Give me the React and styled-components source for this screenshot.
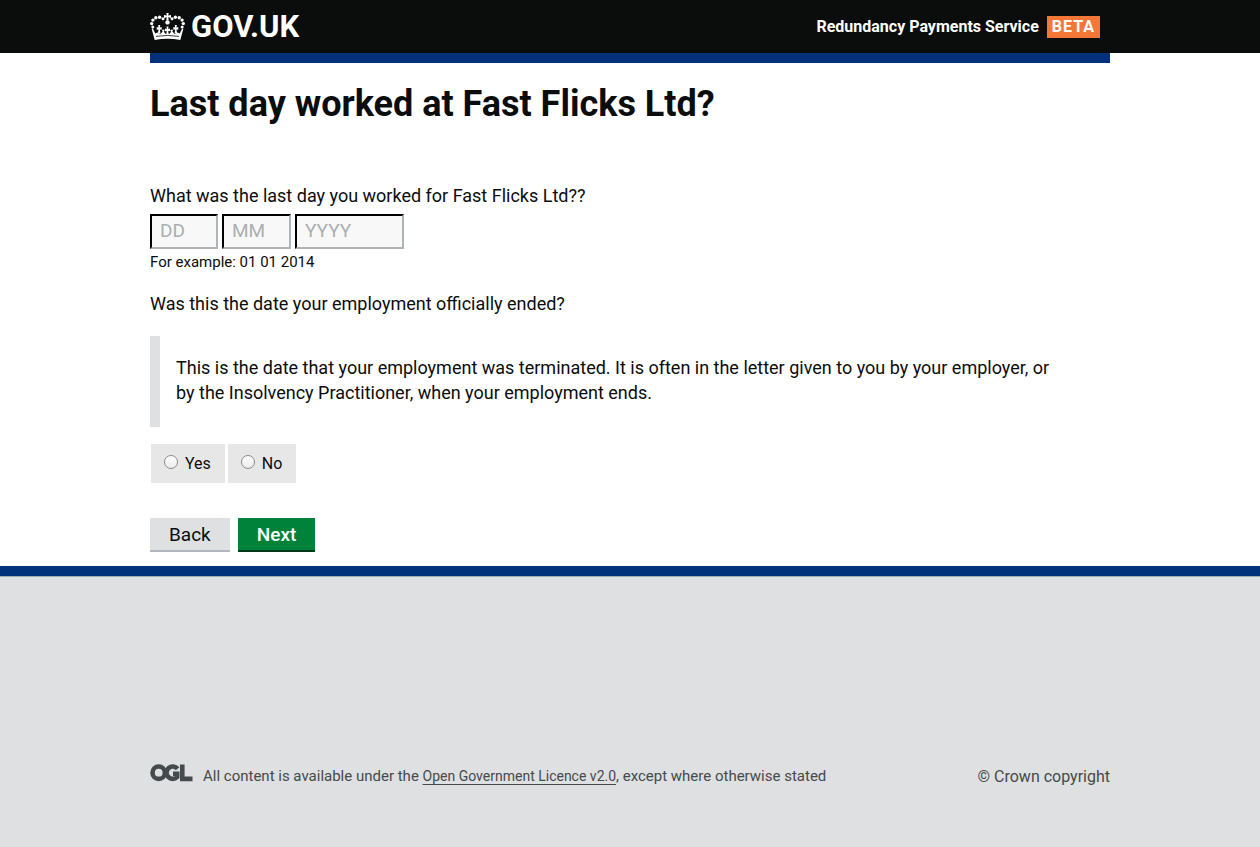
import React from "react";
import styled, { createGlobalStyle } from "styled-components";

const GlobalStyle = createGlobalStyle`
  *, *::before, *::after { box-sizing: border-box; }
  html { background: #dee0e2; }
  body {
    margin: 0;
    background: #fff;
    color: #0b0c0c;
    font-family: Roboto, "Liberation Sans", sans-serif;
    font-size: 18px;
    line-height: 25px;
  }
`;

const Container = styled.div`
  max-width: 960px;
  margin: 0 auto;
`;

const Header = styled.header`
  background: #0b0c0c;
`;

const HeaderInner = styled(Container)`
  display: flex;
  align-items: center;
  justify-content: space-between;
  height: 53px;
  padding-right: 10px;
`;

const Logo = styled.a`
  display: flex;
  align-items: center;
  gap: 6px;
  color: #fff;
  font-size: 31px;
  font-weight: 700;
  line-height: 32px;
  text-decoration: none;
`;

const Service = styled.div`
  display: flex;
  align-items: center;
  gap: 8px;
`;

const ServiceLink = styled.a`
  color: #fff;
  font-size: 16px;
  font-weight: 700;
  text-decoration: none;
`;

const Beta = styled.strong`
  padding: 0 5px;
  background: #f47738;
  color: #fff;
  font-size: 16px;
  font-weight: 700;
  line-height: 22px;
  letter-spacing: 1px;
`;

const BlueBar = styled(Container)`
  height: 10px;
  background: #00317a;
`;

const Main = styled(Container).attrs({ as: "main" })`
  padding: 21px 0 14px;
`;

const Title = styled.h1`
  margin: 0 0 59px;
  font-size: 36px;
  font-weight: 700;
  line-height: 40px;
`;

const Group = styled.fieldset`
  min-width: 0;
  margin: 0;
  padding: 0;
  border: 0;
`;

const Legend = styled.legend`
  padding: 0;
`;

const DateRow = styled.div`
  display: flex;
  gap: 4px;
  margin-top: 6px;
`;

const DateInput = styled.input`
  width: ${(p) => p.$width}px;
  height: 35px;
  padding: 0 8px 2px;
  border: 2px solid;
  border-color: #000 #b1b4b6 #b1b4b6 #000;
  border-radius: 0;
  background: #f8f8f8;
  color: #0b0c0c;
  font: inherit;
  font-size: 19px;
  &::placeholder { color: #a9afb2; opacity: 1; }
`;

const Hint = styled.p`
  margin: 1px 0 16px;
  font-size: 15px;
`;

const Panel = styled.div`
  margin: 20px 0 17px;
  padding: 19px 40px 22px 16px;
  border-left: 10px solid #dee0e2;
  p { margin: 0; }
`;

const Options = styled.div`
  display: flex;
  gap: 3px;
  padding-left: 1px;
`;

const Option = styled.label`
  display: flex;
  align-items: center;
  gap: 7px;
  height: 39px;
  padding: 0 14px 0 13px;
  background: #e7e7e7;
  font-size: 16px;
`;

const Radio = styled.input`
  appearance: none;
  width: 14px;
  height: 14px;
  margin: 0 0 3px;
  border: 1px solid #8b8b8b;
  border-radius: 50%;
  background: linear-gradient(#fff, #ececec);
  &:checked { box-shadow: inset 0 0 0 3px #fff; background: #333; }
`;

const Actions = styled.div`
  display: flex;
  gap: 8px;
  margin-top: 35px;
`;

const Button = styled.button`
  height: 34px;
  padding: 0 19px;
  border: 0;
  border-bottom: 2px solid ${(p) => (p.$primary ? "#003618" : "#b1b7bd")};
  background: ${(p) => (p.$primary ? "#00823b" : "#dee0e2")};
  color: ${(p) => (p.$primary ? "#fff" : "#0b0c0c")};
  font: inherit;
  font-size: 19px;
  font-weight: ${(p) => (p.$primary ? 500 : 400)};
`;

const Footer = styled.footer`
  border-top: 10px solid #00317a;
  background: #dee0e2;
  color: #454a4c;
  font-size: 15px;
`;

const FooterRule = styled.div`
  height: 1px;
  background: #a1acb2;
`;

const FooterInner = styled(Container)`
  display: flex;
  align-items: center;
  justify-content: space-between;
  padding: 187px 0 58px;
`;

const Licence = styled.div`
  display: flex;
  align-items: center;
  gap: 10px;
  svg { margin-bottom: 7px; }
  p { margin: 0; }
`;

const LicenceLink = styled.a`
  color: inherit;
  font-size: 14px;
  text-underline-offset: 3px;
`;

const CopyrightLink = styled.a`
  color: inherit;
  font-size: 16px;
  text-decoration: none;
`;

const archBeads = [
  [13, 5.8, 1.5],
  [9.6, 4.3, 1.7],
  [5.8, 4.8, 1.7],
  [2.9, 7.1, 1.7],
  [1.7, 10.6, 1.7],
  [2.8, 14, 1.5],
];

function Ornament({ x, y }) {
  return (
    <path
      transform={`translate(${x} ${y})`}
      d="M-1-3.400H1L.7-1 2.500-1.500V1.300L.7.9 1.300 5H-1.300L-.7.9-2.500 1.300V-1.500L-.7-1z"
    />
  );
}

function Crown() {
  return (
    <svg width="35" height="28" viewBox="0 0 35 28" fill="#fff" aria-hidden="true">
      <path d="M16.300 0h2.400l-.5 2.500 2.800-.6v3l-2.800-.6.5 3h-2.400l.5-3-2.800.6v-3l2.800.6z" />
      <circle cx="17.500" cy="9.400" r="2.200" />
      {archBeads.map(([x, y, r]) => (
        <React.Fragment key={x}>
          <circle cx={x} cy={y} r={r} />
          <circle cx={35 - x} cy={y} r={r} />
        </React.Fragment>
      ))}
      <Ornament x={17.5} y={17} />
      <Ornament x={9.2} y={15.5} />
      <Ornament x={25.8} y={15.5} />
      <circle cx="13.300" cy="17.600" r="1.200" />
      <circle cx="21.700" cy="17.600" r="1.200" />
      <path d="M2.800 15.500L5.300 20.500 7.400 19.600 10.300 21.200 13.300 17.800 15.300 20.800H19.700L21.700 17.800 24.700 21.200 27.600 19.600 29.700 20.500 32.200 15.500 33.300 16 30.300 27Q17.500 24.600 4.700 27L1.700 16z" />
      <path d="M6 23.400Q17.500 21.400 29 23.400" fill="none" stroke="#0b0c0c" strokeWidth=".8" />
    </svg>
  );
}

function OglMark() {
  return (
    <svg width="43" height="18" viewBox="0 0 43 18" role="img" aria-label="Open Government Licence">
      <g fill="none" stroke="#454a4c" strokeWidth="4.600">
        <circle cx="8.700" cy="8.700" r="6.200" />
        <path d="M27.600 4.800A6.200 6.200 0 1 0 27.200 13V9.800H23" />
        <path d="M32.300 .5V14.900H42.500" />
      </g>
    </svg>
  );
}

export default function App() {
  return (
    <>
      <GlobalStyle />
      <Header>
        <HeaderInner>
          <Logo href="#">
            <Crown />
            <span>GOV.UK</span>
          </Logo>
          <Service>
            <ServiceLink href="#">Redundancy Payments Service</ServiceLink>
            <Beta>BETA</Beta>
          </Service>
        </HeaderInner>
      </Header>
      <BlueBar />
      <Main>
        <Title>Last day worked at Fast Flicks Ltd?</Title>
        <form onSubmit={(e) => e.preventDefault()}>
          <Group>
            <Legend>What was the last day you worked for Fast Flicks Ltd??</Legend>
            <DateRow>
              <DateInput aria-label="Day" placeholder="DD" $width={68} />
              <DateInput aria-label="Month" placeholder="MM" $width={69} />
              <DateInput aria-label="Year" placeholder="YYYY" $width={109} />
            </DateRow>
            <Hint>For example: 01 01 2014</Hint>
          </Group>
          <Group>
            <Legend>Was this the date your employment officially ended?</Legend>
            <Panel>
              <p>
                This is the date that your employment was terminated. It is often in the letter
                given to you by your employer, or by the Insolvency Practitioner, when your
                employment ends.
              </p>
            </Panel>
            <Options>
              <Option>
                <Radio type="radio" name="ended" value="yes" />
                <span>Yes</span>
              </Option>
              <Option>
                <Radio type="radio" name="ended" value="no" />
                <span>No</span>
              </Option>
            </Options>
          </Group>
          <Actions>
            <Button type="button">Back</Button>
            <Button type="submit" $primary>Next</Button>
          </Actions>
        </form>
      </Main>
      <Footer>
        <FooterRule />
        <FooterInner>
          <Licence>
            <OglMark />
            <p>
              All content is available under the{" "}
              <LicenceLink href="#">Open Government Licence v2.0</LicenceLink>, except where
              otherwise stated
            </p>
          </Licence>
          <CopyrightLink href="#">© Crown copyright</CopyrightLink>
        </FooterInner>
      </Footer>
    </>
  );
}
